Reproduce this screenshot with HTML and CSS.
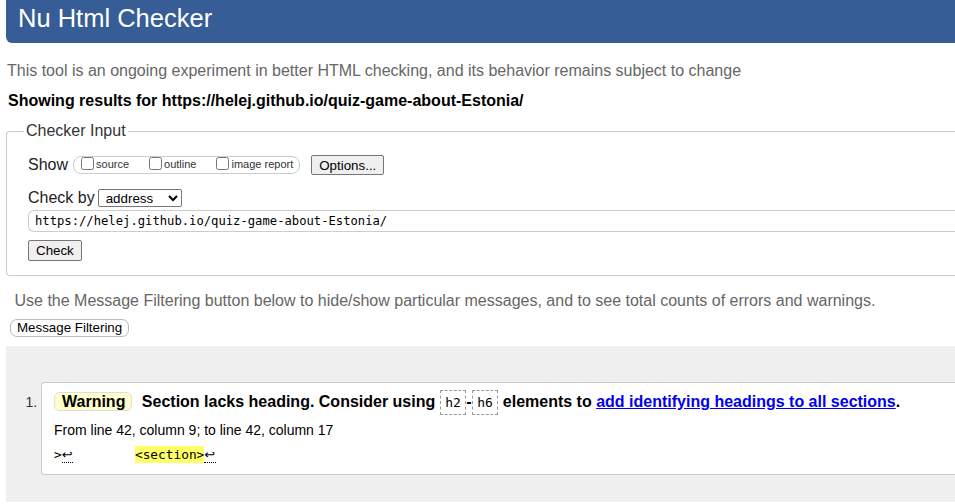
FILE: index.html
```html
<!DOCTYPE html>
<html lang="en">
<head>
<meta charset="utf-8">
<title>Nu Html Checker</title>
<link rel="stylesheet" href="styles.css">
</head>
<body>
<h1 class="title">Nu Html Checker</h1>
<p class="intro">This tool is an ongoing experiment in better HTML checking, and its behavior remains subject to change</p>
<p class="showing">Showing results for https://helej.github.io/quiz-game-about-Estonia/</p>
<fieldset class="checker">
  <legend class="checker-legend">Checker Input</legend>
  <div class="row row-show">
    <span class="row-label">Show</span>
    <span class="show-box">
      <label class="opt"><input type="checkbox" class="cb"><span class="opt-text">source</span></label>
      <label class="opt"><input type="checkbox" class="cb"><span class="opt-text">outline</span></label>
      <label class="opt opt-last"><input type="checkbox" class="cb"><span class="opt-text">image report</span></label>
    </span>
    <button type="button" class="btn btn-options">Options...</button>
  </div>
  <div class="row row-by">
    <span class="row-label">Check by</span>
    <select class="by-select">
      <option>address</option>
      <option>file upload</option>
      <option>text input</option>
    </select>
  </div>
  <input type="text" class="url-input" value="https://helej.github.io/quiz-game-about-Estonia/">
  <div class="check-wrap"><button type="button" class="btn btn-check">Check</button></div>
</fieldset>
<p class="filter-note">Use the Message Filtering button below to hide/show particular messages, and to see total counts of errors and warnings.</p>
<div class="filter-wrap"><button type="button" class="btn-filter">Message Filtering</button></div>
<ol class="results">
  <li class="card">
    <p class="msg"><span class="pill">Warning</span> Section lacks heading. Consider using <code class="tag">h2</code>-<code class="tag">h6</code> elements to <a class="msg-link" href="#">add identifying headings to all sections</a>.</p>
    <p class="loc">From line 42, column 9; to line 42, column 17</p>
    <p class="extract">&gt;<span class="lf">↩</span>        <span class="hl">&lt;section&gt;</span><span class="lf">↩</span></p>
  </li>
</ol>
</body>
</html>
```

FILE: styles.css
```css
html, body {
  margin: 0;
  padding: 0;
}

body {
  font-family: "Liberation Sans", Arial, sans-serif;
  font-size: 16px;
  color: #000;
  background: #fff;
}

.title {
  margin: 0 0 0 6px;
  padding: 4px 12px 10px;
  font-size: 25.5px;
  line-height: 29px;
  font-weight: normal;
  color: #fff;
  background: #365d95;
  border-bottom-left-radius: 6px;
}

.intro {
  margin: 19px 0 0 7px;
  color: #666;
}

.showing {
  margin: 12px 0 0 8px;
  font-weight: bold;
}

.checker {
  margin: 12px 0 0 6px;
  padding: 0 0 14px 21px;
  border: 1px solid #ccc;
  border-right: none;
  border-radius: 4px 0 0 4px;
  min-width: 0;
}

.checker-legend {
  margin-left: -4px;
  padding: 0 2px;
  color: #333;
  font-size: 16px;
}

.row {
  display: flex;
  align-items: center;
}

.row-label {
  color: #222;
}

.row-show {
  margin-top: 15px;
  height: 20px;
}

.row-show .row-label {
  margin-right: 5px;
}

.show-box {
  display: flex;
  align-items: flex-start;
  box-sizing: border-box;
  height: 18px;
  border: 1px solid #ccc;
  border-radius: 8px;
  padding: 0 6px 0 3px;
  margin-right: 11px;
}

.opt {
  display: flex;
  align-items: flex-start;
  margin-right: 16px;
  font-size: 11px;
  color: #333;
}

.opt-last {
  margin-right: 0;
}

.cb {
  margin: 0 2px 0 4px;
  width: 13px;
  height: 13px;
}

.opt-text {
  margin-top: 1px;
  line-height: 13px;
}

.btn {
  box-sizing: border-box;
  font-family: "Liberation Sans", Arial, sans-serif;
  font-size: 13.33px;
  color: #000;
  background: #efefef;
  border: 1px solid #767676;
  border-radius: 2px;
  padding: 0 7px;
}

.btn-options {
  height: 20px;
}

.row-by {
  margin-top: 14px;
}

.by-select {
  box-sizing: border-box;
  margin-left: 3px;
  width: 84px;
  height: 18px;
  font-family: "Liberation Sans", Arial, sans-serif;
  font-size: 13.33px;
  color: #000;
  background: #fff;
  border: 1px solid #767676;
  border-radius: 2px;
  padding: 0 0 0 3px;
}

.url-input {
  display: block;
  box-sizing: border-box;
  margin: 3px 0 0;
  width: 100%;
  height: 22px;
  padding: 0 6px;
  font-family: "DejaVu Sans Mono", "Liberation Mono", monospace;
  font-size: 12.2px;
  color: #000;
  border: 1px solid #ccc;
  border-right: none;
  border-radius: 6px 0 0 6px;
  outline: none;
}

.check-wrap {
  margin-top: 8px;
}

.btn-check {
  height: 21px;
}

.filter-note {
  margin: 16px 0 0 14.5px;
  color: #666;
}

.filter-wrap {
  margin: 8px 0 0 10px;
}

.btn-filter {
  box-sizing: border-box;
  height: 18px;
  padding: 0 6px;
  font-family: "Liberation Sans", Arial, sans-serif;
  font-size: 13.33px;
  color: #000;
  background: #fff;
  border: 1px solid #bbb;
  border-radius: 7px;
}

.results {
  margin: 9.5px 0 0 6px;
  padding: 35.5px 0 27.5px 35px;
  background: #efefef;
  list-style: decimal;
}

.card {
  background: #fff;
  border: 1px solid #ccc;
  border-right: none;
  border-radius: 4px 0 0 4px;
  padding: 7.5px 0 8.5px 12px;
  font-size: 14px;
  color: #000;
}

.card::marker {
  color: #333;
}

.msg {
  margin: 0;
  font-size: 16px;
  font-weight: bold;
  line-height: 24px;
}

.pill {
  padding: 0 6px 0 7px;
  margin-right: 5px;
  background: #ffc;
  border: 1px solid #ddd;
  border-radius: 6px;
}

.tag {
  font-family: "DejaVu Sans Mono", "Liberation Mono", monospace;
  font-size: 13px;
  font-weight: normal;
  padding: 4px 4.5px;
  border: 1px dashed #999;
}

.msg-link {
  color: #00e;
  text-decoration: underline;
}

.loc {
  margin: 5px 0 0;
  line-height: 20px;
}

.extract {
  margin: 5px 0 0;
  font-family: "DejaVu Sans Mono", "Liberation Mono", monospace;
  font-size: 12.8px;
  line-height: 20px;
  white-space: pre;
}

.lf {
  display: inline-block;
  width: 11.6px;
  font-family: "DejaVu Sans", sans-serif;
  font-size: 13px;
  line-height: 14px;
  border-bottom: 1px dotted #000;
}

.hl {
  background: #ff6;
  padding: 1px 0;
}
```
